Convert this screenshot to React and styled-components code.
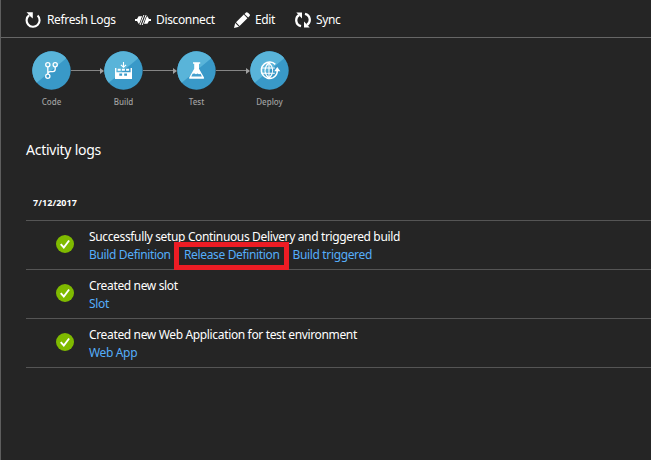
import React from "react";
import styled, { createGlobalStyle } from "styled-components";

const Global = createGlobalStyle`
  * { box-sizing: border-box; }
  body { margin: 0; background: #252525; overflow: hidden; }
`;

const Blade = styled.main`
  width: 651px;
  height: 460px;
  background: #252525;
  border-left: 1px solid #5e5e5e;
  color: #fff;
  font: 12px/18px "Noto Sans", "Open Sans", sans-serif;
  letter-spacing: -0.35px;
  white-space: nowrap;
`;

const Toolbar = styled.header`
  display: flex;
  align-items: center;
  height: 38px;
  padding: 2px 0 0 24px;
  border-bottom: 1px solid #666;
`;

const Command = styled.div`
  display: flex;
  align-items: center;
  gap: ${(p) => p.$gap || 5}px;
  width: ${(p) => p.$width}px;
  svg { flex: none; }
`;

const Pipeline = styled.section`
  display: flex;
  align-items: flex-start;
  padding: 13px 0 0 31px;
  height: 92px;
`;

const Stage = styled.div`
  width: 39px;
  display: flex;
  flex-direction: column;
  align-items: center;
`;

const StageLabel = styled.span`
  margin-top: 4px;
  font-size: 8px;
  font-weight: 500;
  line-height: 16px;
  letter-spacing: 0;
  color: #a0a0a0;
`;

const Connector = styled.div`
  width: ${(p) => p.$width}px;
  height: 39px;
  display: flex;
  align-items: center;
  &::before { content: ""; flex: 1; height: 1px; background: #858585; }
  &::after {
    content: "";
    border-left: 4px solid #a0a0a0;
    border-top: 3px solid transparent;
    border-bottom: 3px solid transparent;
  }
`;

const Title = styled.h2`
  margin: 10px 0 0 25px;
  font-size: 14px;
  font-weight: 400;
  line-height: 20px;
  letter-spacing: -0.25px;
`;

const Logs = styled.section`
  margin-left: 25px;
`;

const DateRow = styled.div`
  height: 61px;
  padding: 34px 0 0 7px;
  font-size: 9px;
  font-weight: 700;
  letter-spacing: 0.05px;
  border-bottom: 1px solid #555;
`;

const LogRow = styled.article`
  display: flex;
  height: 49px;
  padding: 7px 0 0 30px;
  border-bottom: 1px solid #555;
  > svg { flex: none; margin: 7px 15px 0 0; }
`;

const Message = styled.div`
  color: #fff;
`;

const Links = styled.div`
  display: flex;
`;

const Link = styled.a`
  position: relative;
  width: ${(p) => p.$width}px;
  color: #55aefa;
`;

const Highlight = styled.span`
  position: absolute;
  left: -10px;
  top: -4px;
  width: 115px;
  height: 28px;
  border: 5px solid #ed1c24;
`;

const RefreshIcon = () => (
  <svg width="16" height="16" viewBox="0 0 16 16" fill="none">
    <path d="M4.2 3.1A6.5 6.5 0 1 0 12.6 3.6" stroke="#fff" strokeWidth="2.1" />
    <path d="M1.5.3h6.3v6.2L5.4 4.5 3.8 2.6z" fill="#fff" />
  </svg>
);

const DisconnectIcon = () => (
  <svg width="16" height="16" viewBox="0 0 16 16">
    <path d="M0 7h2l1.6-2.7h3.6L5.2 11.7H3.6L2 9H0zM16 7h-2l-1.6-2.7h-1.6L8.8 11.7h3.6L14 9h2z" fill="#fff" />
    <path d="M9.2 2.2 4.8 13.8M11.3 2.2 6.9 13.8" stroke="#252525" strokeWidth="2.4" />
    <path d="M8.9 3 5 13M11.1 3 7.2 13" stroke="#fff" strokeWidth="1" />
  </svg>
);

const EditIcon = () => (
  <svg width="16" height="16" viewBox="0 0 16 16" fill="#fff">
    <path d="M0 16 1.2 11 5 14.8zM2 10.2 9.8 2.6l3.6 3.6-7.8 7.8zM10.5 1.9 12 .5Q13 0 14 .7l1.4 1.4q.9 1 .2 2l-1.4 1.4z" />
  </svg>
);

const SyncIcon = () => (
  <svg width="16" height="16" viewBox="0 0 16 16" fill="none">
    <path d="M6 14.2C.5 12.8-.3 6 4 3M10 1.8C15.5 3.2 16.3 10 12 13" stroke="#fff" strokeWidth="2.3" />
    <path d="M1.3.5H7v6zM14.7 15.5H9v-6z" fill="#fff" />
  </svg>
);

const SuccessIcon = () => (
  <svg width="18" height="18" viewBox="0 0 18 18">
    <circle cx="9" cy="9" r="9" fill="#7fba00" />
    <path d="m4.7 9.2 3.1 3.3 5.3-7" fill="none" stroke="#fff" strokeWidth="1.9" />
  </svg>
);

const glyphs = {
  Code: (
    <g fill="none" stroke="#fff" strokeWidth="1.3">
      <circle cx="15.8" cy="13.8" r="2.1" />
      <circle cx="23.2" cy="13.8" r="2.1" />
      <circle cx="15.8" cy="25.2" r="2.1" />
      <path d="M15.8 16v7M23.2 16v2.2q0 2.4-2.4 2.4h-2.4q-2.6 0-2.6 2.5" />
    </g>
  ),
  Build: (
    <g fill="#fff">
      <path d="M11 17h1.4v4.2h14.2V17H28v11H11z" />
      <path d="M13.7 17.7h3v2h-3zM17.9 17.7h3v2h-3zM22.1 17.7h3v2h-3z" />
      <path d="M15.3 22.5h2.8v2.3h-2.8zM20.2 22.5H23v2.3h-2.8z" fill="#3c9bca" />
      <path d="M19.5 11v5M16.9 13.8l2.6 2.4 2.6-2.4" fill="none" stroke="#fff" strokeWidth="1.1" />
    </g>
  ),
  Test: (
    <g fill="#fff">
      <path d="M16 11.2h7.2v1.5H22v5l5 8.8q.6 1.3-.8 1.3H13q-1.4 0-.8-1.3l5-8.8v-5H16z" />
      <path d="m15.6 22.8-1.3 2.6h10.6l-1.4-2.7-1.5.5-1.5-.8-1.5.9-1.5-.8z" fill="#459fce" />
    </g>
  ),
  Deploy: (
    <g fill="none" stroke="#fff" strokeWidth="1.1">
      <path d="M25.3 13.4A8.2 8.2 0 1 0 23.2 26.6Q27.3 24.3 27.3 19.5" strokeWidth="1.6" />
      <path d="M19 11.5v16M11.2 17h13.6M11.2 22.2h13.6M19 11.5q-8 8 0 16M19 11.5q7.5 8 0 16" />
      <path d="m24.2 20.2 3.1-4.2 3 4.2z" fill="#fff" stroke="none" />
    </g>
  ),
};

const StageIcon = ({ name }) => (
  <svg width="39" height="39" viewBox="0 0 39 39">
    <circle cx="19.5" cy="19.5" r="19.2" fill="#3999c8" />
    <path d="M4.7 31.8A19.2 19.2 0 1 1 34.3 7.3z" fill="#59b4d9" />
    {glyphs[name]}
  </svg>
);

const stages = [
  { name: "Code", next: 33 },
  { name: "Build", next: 34 },
  { name: "Test", next: 34 },
  { name: "Deploy" },
];

const logs = [
  {
    message: "Successfully setup Continuous Delivery and triggered build",
    links: [
      { text: "Build Definition", width: 95 },
      { text: "Release Definition", width: 108.5, highlighted: true },
      { text: "Build triggered", width: 90 },
    ],
  },
  { message: "Created new slot", links: [{ text: "Slot" }] },
  {
    message: "Created new Web Application for test environment",
    links: [{ text: "Web App" }],
  },
];

export default function App() {
  return (
    <>
      <Global />
      <Blade>
        <Toolbar>
          <Command $width={110} $gap={6}><RefreshIcon />Refresh Logs</Command>
          <Command $width={99}><DisconnectIcon />Disconnect</Command>
          <Command $width={61}><EditIcon />Edit</Command>
          <Command $width={60}><SyncIcon />Sync</Command>
        </Toolbar>
        <Pipeline>
          {stages.map(({ name, next }) => (
            <React.Fragment key={name}>
              <Stage>
                <StageIcon name={name} />
                <StageLabel>{name}</StageLabel>
              </Stage>
              {next && <Connector $width={next} />}
            </React.Fragment>
          ))}
        </Pipeline>
        <Title>Activity logs</Title>
        <Logs>
          <DateRow>7/12/2017</DateRow>
          {logs.map((log) => (
            <LogRow key={log.message}>
              <SuccessIcon />
              <div>
                <Message>{log.message}</Message>
                <Links>
                  {log.links.map((link) => (
                    <Link key={link.text} $width={link.width}>
                      {link.text}
                      {link.highlighted && <Highlight />}
                    </Link>
                  ))}
                </Links>
              </div>
            </LogRow>
          ))}
        </Logs>
      </Blade>
    </>
  );
}
